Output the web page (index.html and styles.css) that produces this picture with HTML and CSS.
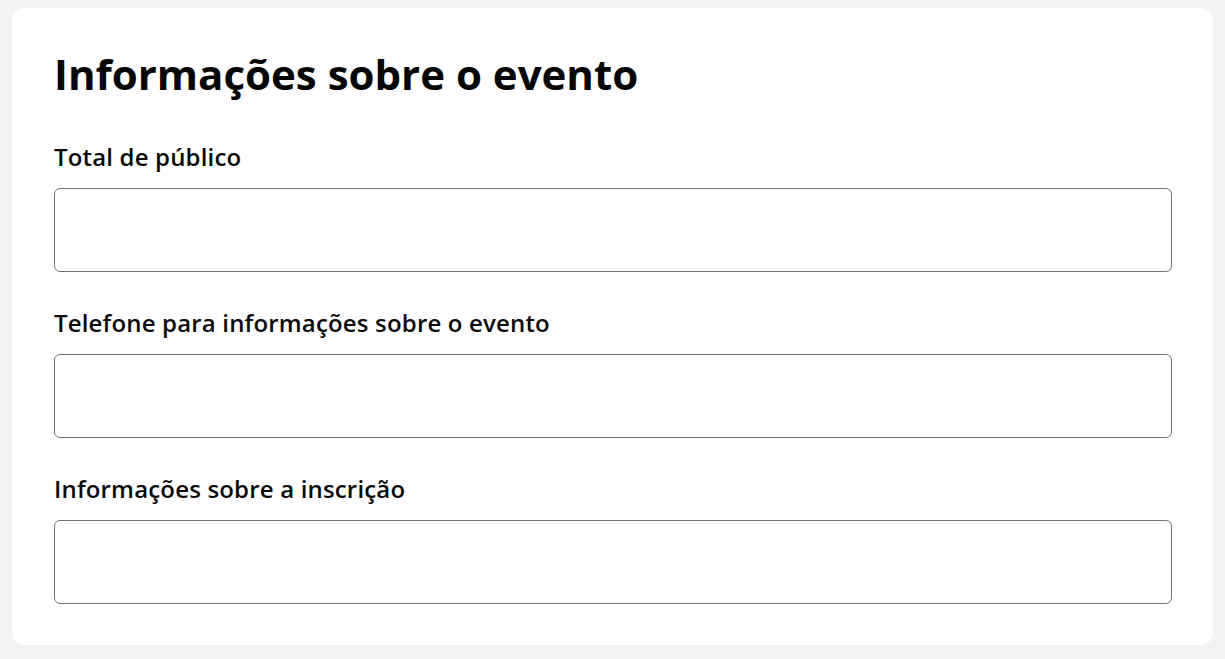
FILE: index.html
```html
<!DOCTYPE html>
<html lang="pt-BR">
<head>
<meta charset="utf-8">
<link rel="stylesheet" href="styles.css">
</head>
<body>
<main class="card">
  <h1 class="title">Informações sobre o evento</h1>
  <div class="field">
    <label class="label" for="publico">Total de público</label>
    <input class="input" id="publico" type="text">
  </div>
  <div class="field">
    <label class="label" for="telefone">Telefone para informações sobre o evento</label>
    <input class="input" id="telefone" type="text">
  </div>
  <div class="field">
    <label class="label" for="inscricao">Informações sobre a inscrição</label>
    <input class="input" id="inscricao" type="text">
  </div>
</main>
</body>
</html>
```
FILE: styles.css
```css
html, body {
  margin: 0;
  padding: 0;
  background: #f3f3f3;
  font-family: "Open Sans", "Noto Sans", sans-serif;
  color: #0a0a0a;
}
body {
  padding: 8px 12px 14px 12px;
}
.card {
  background: #fff;
  border-radius: 12px;
  padding: 42px 41px 41px 42px;
  display: flex;
  flex-direction: column;
  gap: 35px;
}
.title {
  margin: 0 0 8px 0;
  font-size: 42px;
  font-weight: 700;
  line-height: 48px;
  color: #050505;
}
.field {
  display: flex;
  flex-direction: column;
  gap: 15px;
}
.label {
  font-size: 24px;
  font-weight: 600;
  line-height: 32px;
  letter-spacing: 0.17px;
  color: #0a0a0a;
}
.input {
  box-sizing: border-box;
  height: 84px;
  width: 100%;
  border: 1px solid #767676;
  border-radius: 6px;
  background: #fff;
  margin: 0;
  font: inherit;
}
```
